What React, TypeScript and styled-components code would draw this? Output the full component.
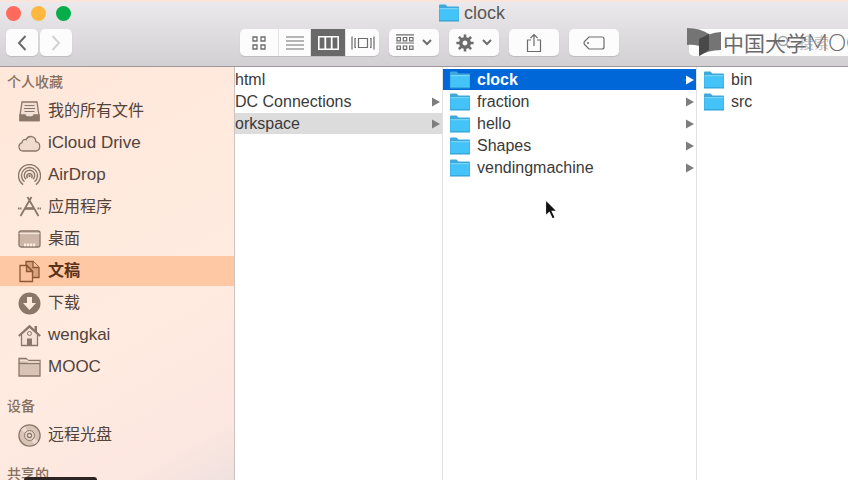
import React from "react";
import styled, { createGlobalStyle, css } from "styled-components";

const latin = `"Liberation Sans", "Noto Sans CJK SC", sans-serif`;

const GlobalStyle = createGlobalStyle`
  * { box-sizing: border-box; }
  body { margin: 0; overflow: hidden; font-family: ${latin}; }
  button, input { font: inherit; color: inherit; border: 0; padding: 0; margin: 0; background: none; }
  svg { display: block; flex: none; }
`;

const Window = styled.div`
  position: relative;
  display: flex;
  flex-direction: column;
  height: 100vh;
  overflow: hidden;
  background: #fff;
`;

const Header = styled.header`
  position: relative;
  flex: none;
  border-top: 2px solid #fde4da;
  border-bottom: 1px solid #9b999b;
  background: linear-gradient(#ebe9eb, #d2d0d2);
`;

const TitleBar = styled.div`
  display: grid;
  grid-template-columns: 96px 1fr;
  align-items: center;
  height: 22px;
`;

const Lights = styled.div`
  display: flex;
  gap: 10px;
  padding-left: 6px;
`;

const Light = styled.button<{ $color: string }>`
  width: 15px;
  height: 15px;
  border-radius: 50%;
  background: ${(p) => p.$color};
`;

const Title = styled.h1`
  display: flex;
  align-items: center;
  justify-content: center;
  gap: 5px;
  margin: 0;
  font-size: 18px;
  font-weight: 400;
  line-height: 22px;
  color: #59575a;
`;

const Toolbar = styled.div`
  display: flex;
  gap: 10px;
  padding: 5px 0 10px 6px;
`;

const Group = styled.div<{ $gap?: number }>`
  display: flex;
  gap: ${(p) => p.$gap ?? 0}px;
`;

const Views = styled(Group)`
  margin-left: 158px;
  border-radius: 5px;
  overflow: hidden;
  box-shadow: 0 1px 1px #bdbbbd;
`;

const ToolButton = styled.button<{ $width: number; $color?: string }>`
  display: flex;
  align-items: center;
  justify-content: center;
  gap: 8px;
  width: ${(p) => p.$width}px;
  height: 27px;
  border-radius: 5px;
  background: #fdfcfd;
  color: ${(p) => p.$color ?? "#6c6c6c"};
  box-shadow: 0 1px 1px #bdbbbd;
`;

const ViewButton = styled(ToolButton)<{ $active?: boolean }>`
  border-radius: 0;
  box-shadow: none;
  & + & { border-left: 1px solid #e4e2e4; }
  ${(p) =>
    p.$active &&
    css`
      background: #6a696a;
      color: #fff;
    `}
`;

const Search = styled.label`
  display: flex;
  flex: 1;
  align-items: center;
  justify-content: center;
  gap: 8px;
  height: 27px;
  min-width: 0;
  margin-left: 60px;
  padding-left: 88px;
  border-radius: 5px 0 0 5px;
  background: #fdfcfd;
  color: #a5a4a5;
`;

const SearchInput = styled.input`
  flex: 1;
  min-width: 0;
  font-size: 15px;
  outline: 0;
  &::placeholder { color: #c4c3c4; opacity: 1; }
`;

const Watermark = styled.div`
  position: absolute;
  left: 687px;
  top: 25px;
  display: flex;
  align-items: center;
  gap: 2px;
  color: #6b6a6b;
  line-height: 30px;
  white-space: nowrap;
  pointer-events: none;
`;

const Brand = styled.span<{ $cjk?: boolean }>`
  font-family: ${(p) => (p.$cjk ? `"Noto Sans CJK SC"` : `Lato, "Open Sans"`)}, sans-serif;
  font-size: ${(p) => (p.$cjk ? 21 : 23)}px;
  font-weight: ${(p) => (p.$cjk ? 400 : 300)};
`;

const BrandName = styled.div`
  display: flex;
`;

const Body = styled.div`
  display: flex;
  flex: 1;
  min-height: 0;
`;

const Sidebar = styled.nav`
  display: flex;
  flex: 0 0 235px;
  flex-direction: column;
  gap: 15px;
  padding-top: 6px;
  overflow: hidden;
  border-right: 1px solid #c9c3c1;
  background: linear-gradient(150deg, #ffe8da 0%, #ffebe0 62%, #fde7e1 88%, #efe1df 100%);
`;

const Section = styled.section`
  flex: none;
`;

const SectionTitle = styled.h2`
  margin: 0 0 5px;
  padding-left: 7px;
  font-size: 14px;
  font-weight: 500;
  line-height: 18px;
  color: #86705f;
`;

const Places = styled.ul`
  display: grid;
  gap: 2px;
  margin: 0;
  padding: 0;
  list-style: none;
`;

const Place = styled.button<{ $active?: boolean; $cjk: boolean }>`
  display: flex;
  align-items: center;
  gap: 7px;
  width: 100%;
  height: 30px;
  padding-left: 18px;
  font-size: ${(p) => (p.$cjk ? 16 : 17)}px;
  line-height: 30px;
  text-align: left;
  color: ${(p) => (p.$active ? "#5a3218" : "#52433b")};
  font-weight: ${(p) => (p.$active ? 700 : 400)};
  background: ${(p) => (p.$active ? "#ffc8a5" : "transparent")};
  svg { color: ${(p) => (p.$active ? "#8d5634" : "#8b7769")}; }
`;

const Column = styled.ul<{ $width?: number }>`
  display: flex;
  flex: ${(p) => (p.$width ? `0 0 ${p.$width}px` : "1 1 0")};
  flex-direction: column;
  gap: 1px;
  min-width: 0;
  margin: 0;
  padding: 2px 0 0;
  overflow: hidden;
  border-right: ${(p) => (p.$width ? "1px solid #e2e2e2" : "0")};
  list-style: none;
`;

const Entry = styled.button<{ $state?: "open" | "focus"; $clipped?: boolean }>`
  display: flex;
  align-items: center;
  gap: 7px;
  width: 100%;
  height: 21px;
  padding: 0 2px 0 ${(p) => (p.$clipped ? 0 : 7)}px;
  font-size: 16px;
  line-height: 21px;
  text-align: left;
  color: ${(p) => (p.$state === "focus" ? "#fff" : "#3a3a3a")};
  font-weight: ${(p) => (p.$state === "focus" ? 700 : 400)};
  background: ${(p) => (p.$state === "focus" ? "#0067d8" : p.$state === "open" ? "#dcdcdc" : "transparent")};
`;

const Name = styled.span`
  flex: 1;
  white-space: nowrap;
`;

const Cursor = styled.svg`
  position: absolute;
  left: 543px;
  top: 198px;
`;

const Dock = styled.div`
  position: absolute;
  left: 24px;
  bottom: 0;
  width: 73px;
  height: 3px;
  border-radius: 3px 3px 0 0;
  background: #2b2422;
`;

const Folder = () => (
  <svg width="20" height="18" viewBox="0 0 20 18">
    <path d="M0 1.5Q0 .5 1 .5H6.5L8.5 2.5H19Q20 2.5 20 3.5V17H0Z" fill="#3fa9dc" />
    <path d="M.5 4.5H19.5V16.5H.5Z" fill="#43c3f8" />
    <path d="M.5 4.7H19.5" stroke="#83d9fb" />
    <path d="M0 17H20" stroke="#2d9fd3" />
  </svg>
);

const Arrow = ({ color }: { color: string }) => (
  <svg width="8" height="10" viewBox="0 0 8 10">
    <path d="M0 .5L8 5L0 9.5Z" fill={color} />
  </svg>
);

const Chevron = () => (
  <svg width="10" height="7" viewBox="0 0 10 7" fill="none" stroke="currentColor" strokeWidth="2">
    <path d="M1 1L5 5L9 1" />
  </svg>
);

const Nav = ({ d }: { d: string }) => (
  <svg width="10" height="16" viewBox="0 0 10 16" fill="none" stroke="currentColor" strokeWidth="2">
    <path d={d} />
  </svg>
);

const GridIcon = () => (
  <svg width="14" height="14" viewBox="0 0 14 14" fill="none" stroke="currentColor" strokeWidth="1.3">
    <path d="M1 1H5V5H1ZM9 1H13V5H9ZM1 9H5V13H1ZM9 9H13V13H9Z" />
  </svg>
);

const ListIcon = () => (
  <svg width="18" height="14" viewBox="0 0 18 14" stroke="currentColor" strokeWidth="1.2">
    <path d="M0 1H18M0 5H18M0 9H18M0 13H18" />
  </svg>
);

const ColumnsIcon = () => (
  <svg width="21" height="14" viewBox="0 0 21 14" fill="none" stroke="currentColor">
    <path d="M.8 .8H20.2V13.2H.8Z" strokeWidth="1.6" />
    <path d="M7.3 1V13M13.7 1V13" strokeWidth="1.8" />
  </svg>
);

const CoverIcon = () => (
  <svg width="24" height="14" viewBox="0 0 24 14" fill="none" stroke="currentColor" strokeWidth="1.2">
    <path d="M7.5 2.5H16.5V11.5H7.5ZM1 .5V13.5M4 2V12M20 2V12M23 .5V13.5M4 2.5H5M4 11.5H5M19 2.5H20M19 11.5H20" />
  </svg>
);

const ArrangeIcon = () => (
  <svg width="18" height="17" viewBox="0 0 18 17" fill="none" stroke="currentColor" strokeWidth="1.2">
    <path d="M0 .8H18M0 9H18M1 3.5H4.4V6.8H1ZM7.3 3.5H10.7V6.8H7.3ZM13.6 3.5H17V6.8H13.6ZM1 12H4.4V15.4H1ZM7.3 12H10.7V15.4H7.3ZM13.6 12H17V15.4H13.6Z" />
  </svg>
);

const GearIcon = () => (
  <svg width="18" height="18" viewBox="-9 -9 18 18" fill="none" stroke="currentColor">
    <circle r="4.2" strokeWidth="3.6" />
    {[0, 45, 90, 135].map((a) => (
      <path key={a} d="M0 -8.6V-5M0 8.6V5" strokeWidth="2.6" transform={`rotate(${a})`} />
    ))}
  </svg>
);

const ShareIcon = () => (
  <svg width="16" height="20" viewBox="0 0 16 20" fill="none" stroke="currentColor" strokeWidth="1.2">
    <path d="M5 7H1.5V18.5H14.5V7H11M8 13V1.5M4.5 5L8 1.5L11.5 5" />
  </svg>
);

const TagIcon = () => (
  <svg width="22" height="14" viewBox="0 0 22 14" fill="none" stroke="currentColor" strokeWidth="1.2">
    <path d="M6 1H19Q21 1 21 3V11Q21 13 19 13H6L2 9Q0 7 2 5Z" />
    <circle cx="5" cy="7" r="1" fill="currentColor" stroke="none" />
  </svg>
);

const Magnifier = () => (
  <svg width="14" height="15" viewBox="0 0 14 15" fill="none" stroke="currentColor" strokeWidth="1.5">
    <circle cx="6" cy="6" r="4.5" />
    <path d="M9.3 9.3L13 13.5" />
  </svg>
);

const BookMark = () => (
  <svg width="34" height="28" viewBox="0 0 34 28">
    <path d="M0 0Q13 0 22 6V22Q11 16 0 17Z" fill="#757475" />
    <path d="M12 11Q22 5 34 4V22Q21 22 12 28Z" fill="#757475" />
    <path d="M12 11L22 6V22L12 28Z" fill="#4a494a" />
  </svg>
);

const PlaceIcon = ({ children }: { children: React.ReactNode }) => (
  <svg width="23" height="23" viewBox="0 0 23 23" fill="none" stroke="currentColor" strokeWidth="1.3">
    {children}
  </svg>
);

const tint = "#d9c3b7";

const icons: Record<string, React.ReactNode> = {
  files: (
    <>
      <path d="M4 2H19L21 15.5V20.5H2V15.5Z" fill="#f3dfd4" />
      <path d="M2 15H7L8.5 17H14.5L16 15H21V20.5H2Z" fill="currentColor" />
      <path d="M6.5 5.5H16.5M6 8.5H17M6.5 11.5H16.5" strokeWidth="1" />
    </>
  ),
  cloud: <path d="M5 19A4.3 4.3 0 0 1 4 10.6A3.3 3.3 0 0 1 8.2 7.6A5 5 0 0 1 17.8 9.6A4.8 4.8 0 0 1 18 19Z" fill="#f0dace" />,
  airdrop: (
    <>
      <path d="M5.2 20.6A11 11 0 1 1 17.8 20.6M6.5 17.8A8 8 0 1 1 16.5 17.8M8 15.3A5.2 5.2 0 1 1 15 15.3" strokeWidth="1.4" />
      <path d="M9.6 14A2.6 2.6 0 1 1 13.4 14" strokeWidth="1.4" />
      <circle cx="11.5" cy="12" r="1.2" fill="currentColor" stroke="none" />
    </>
  ),
  apps: (
    <>
      <path d="M9.5 1L20.5 20M13.5 1L2.5 20" strokeWidth="1.8" />
      <path d="M7 12.5H16" strokeWidth="2.6" />
      <path d="M0 12.5H3.5M19.5 12.5H23" strokeWidth="2.2" strokeDasharray="1.5 .6" />
    </>
  ),
  desktop: (
    <>
      <rect x="1" y="3" width="21" height="16" rx="2" fill="#cdb5a8" />
      <path d="M1.5 5.5H21.5" stroke="#f6e5da" strokeWidth="1.2" />
      <path d="M6 16.8H17.3" stroke="#ffede2" strokeWidth="2.8" strokeDasharray="2.2 .8" />
    </>
  ),
  documents: (
    <>
      <path d="M8 1.5H15L21 7.5V17.5H8Z" fill="#d7a27e" />
      <path d="M15 1.5V7.5H21" fill="#ffc8a5" />
      <path d="M2 5.5H9L14.5 11V21.5H2Z" fill="#fac29e" />
      <path d="M8.5 5.5V11.5H14.5Z" fill="#d7a27e" />
    </>
  ),
  download: (
    <>
      <circle cx="11.5" cy="11.5" r="11" fill="currentColor" stroke="none" />
      <path d="M9 5H14V11H18L11.5 18L5 11H9Z" fill="#ffeadd" stroke="none" />
    </>
  ),
  home: (
    <>
      <path d="M16.5 2V7L19 9.5V2Z" fill="currentColor" stroke="none" />
      <path d="M3.5 10V21.5H19.5V10L11.5 3Z" fill="#f6e2d7" />
      <path d="M.8 12L11.5 2.2L22.2 12" strokeWidth="2" />
      <rect x="9.5" y="15" width="4" height="6.5" fill="currentColor" strokeWidth="1" />
      <circle cx="11.5" cy="9.5" r="2" strokeWidth="1" />
    </>
  ),
  folder: (
    <>
      <path d="M1 20V2.5H8L10 4.5H22V20Z" fill={tint} />
      <path d="M1 7.5H22" />
      <path d="M2 4.5H9L10.5 6H21.5" stroke="#f3dfd4" />
    </>
  ),
  disc: (
    <>
      <circle cx="11.5" cy="11.5" r="10.6" fill={tint} />
      <path d="M11.5 11.5L3 6A10 10 0 0 1 7 2.5ZM11.5 11.5L20 17A10 10 0 0 1 16 20.5Z" fill="#ecdcd3" stroke="none" />
      <circle cx="11.5" cy="11.5" r="5" fill="#e7d5ca" strokeWidth="1" />
      <circle cx="11.5" cy="11.5" r="2" fill="#fff1e8" />
    </>
  ),
};

type Item = { label: string; icon: string; cjk?: boolean; active?: boolean };

const sections: { title: string; items: Item[] }[] = [
  {
    title: "个人收藏",
    items: [
      { label: "我的所有文件", icon: "files", cjk: true },
      { label: "iCloud Drive", icon: "cloud" },
      { label: "AirDrop", icon: "airdrop" },
      { label: "应用程序", icon: "apps", cjk: true },
      { label: "桌面", icon: "desktop", cjk: true },
      { label: "文稿", icon: "documents", cjk: true, active: true },
      { label: "下载", icon: "download", cjk: true },
      { label: "wengkai", icon: "home" },
      { label: "MOOC", icon: "folder" },
    ],
  },
  { title: "设备", items: [{ label: "远程光盘", icon: "disc", cjk: true }] },
  { title: "共享的", items: [] },
];

type Row = { name: string; state?: "open" | "focus"; arrow?: boolean };

const columns: { width?: number; clipped?: boolean; rows: Row[] }[] = [
  {
    width: 208,
    clipped: true,
    rows: [{ name: "html" }, { name: "DC Connections", arrow: true }, { name: "orkspace", arrow: true, state: "open" }],
  },
  {
    width: 254,
    rows: [
      { name: "clock", arrow: true, state: "focus" },
      { name: "fraction", arrow: true },
      { name: "hello", arrow: true },
      { name: "Shapes", arrow: true },
      { name: "vendingmachine", arrow: true },
    ],
  },
  { rows: [{ name: "bin" }, { name: "src" }] },
];

export default function App() {
  return (
    <>
      <GlobalStyle />
      <Window>
        <Header>
          <TitleBar>
            <Lights>
              <Light $color="#ff6a5c" aria-label="关闭" />
              <Light $color="#ffb83f" aria-label="最小化" />
              <Light $color="#08ad4b" aria-label="缩放" />
            </Lights>
            <Title>
              <Folder />
              clock
            </Title>
          </TitleBar>
          <Toolbar>
            <Group $gap={2}>
              <ToolButton $width={32} aria-label="后退">
                <Nav d="M8.5 1L2 8L8.5 15" />
              </ToolButton>
              <ToolButton $width={32} $color="#d3d2d3" aria-label="前进">
                <Nav d="M1.5 1L8 8L1.5 15" />
              </ToolButton>
            </Group>
            <Views>
              <ViewButton $width={38} aria-label="图标"><GridIcon /></ViewButton>
              <ViewButton $width={32} aria-label="列表"><ListIcon /></ViewButton>
              <ViewButton $width={35} $active aria-label="分栏"><ColumnsIcon /></ViewButton>
              <ViewButton $width={34} aria-label="Cover Flow"><CoverIcon /></ViewButton>
            </Views>
            <ToolButton $width={50} aria-label="排列"><ArrangeIcon /><Chevron /></ToolButton>
            <ToolButton $width={50} aria-label="操作"><GearIcon /><Chevron /></ToolButton>
            <ToolButton $width={50} aria-label="共享"><ShareIcon /></ToolButton>
            <ToolButton $width={50} aria-label="标记"><TagIcon /></ToolButton>
            <Search>
              <Magnifier />
              <SearchInput type="search" placeholder="搜索" aria-label="搜索" />
            </Search>
          </Toolbar>
          <Watermark>
            <BookMark />
            <BrandName>
              <Brand $cjk>中国大学</Brand>
              <Brand>MOOC</Brand>
            </BrandName>
          </Watermark>
        </Header>
        <Body>
          <Sidebar>
            {sections.map((s) => (
              <Section key={s.title}>
                <SectionTitle>{s.title}</SectionTitle>
                <Places>
                  {s.items.map((i) => (
                    <li key={i.label}>
                      <Place $active={i.active} $cjk={!!i.cjk}>
                        <PlaceIcon>{icons[i.icon]}</PlaceIcon>
                        {i.label}
                      </Place>
                    </li>
                  ))}
                </Places>
              </Section>
            ))}
          </Sidebar>
          {columns.map((c, n) => (
            <Column key={n} $width={c.width}>
              {c.rows.map((r) => (
                <li key={r.name}>
                  <Entry $state={r.state} $clipped={c.clipped}>
                    {!c.clipped && <Folder />}
                    <Name>{r.name}</Name>
                    {r.arrow && <Arrow color={r.state === "focus" ? "#fff" : "#7d7d7d"} />}
                  </Entry>
                </li>
              ))}
            </Column>
          ))}
        </Body>
        <Cursor width="16" height="24" viewBox="0 0 16 24">
          <path d="M2.5 1.5V18L6.3 14.5L9.3 21L12.2 19.6L9.2 13.3H14.2Z" fill="#111" stroke="#fff" strokeWidth="1.2" />
        </Cursor>
        <Dock />
      </Window>
    </>
  );
}
